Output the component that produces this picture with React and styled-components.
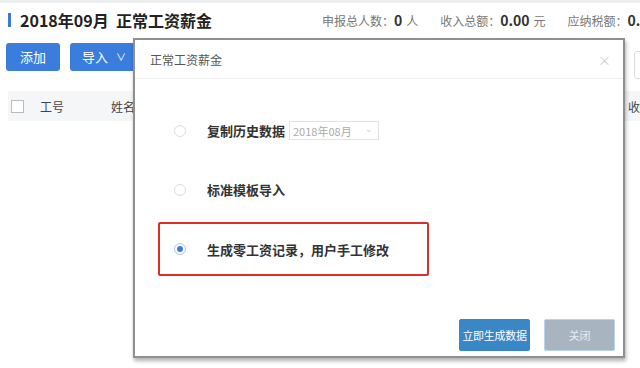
import styled, { createGlobalStyle } from "styled-components";

const Global = createGlobalStyle`
    html, body {
        margin: 0;
        padding: 0;
        background: #fff;
        font-family: "Noto Sans CJK SC", "Noto Sans", sans-serif;
        overflow: hidden;
    }
`;

const Page = styled.div`
    position: relative;
    width: 640px;
    height: 368px;
    border-top: 3px solid #eceef0;
    box-sizing: border-box;
    overflow: hidden;
`;

const Header = styled.div`
    display: flex;
    align-items: center;
    height: 34px;
    padding-left: 8px;
`;

const Title = styled.h1`
    display: flex;
    align-items: center;
    margin: 0;
    font-size: 16px;
    font-weight: 700;
    color: #222;
    white-space: nowrap;
    &::before {
        content: "";
        width: 3px;
        height: 14px;
        background: #3a7bd5;
        margin-right: 9px;
    }
`;

const Stats = styled.div`
    display: flex;
    gap: 22px;
    margin-left: 110px;
    font-size: 12px;
    color: #777;
    white-space: nowrap;
`;

const Num = styled.b`
    font-size: 14px;
    color: #333;
    margin-right: 4px;
`;

const Toolbar = styled.div`
    display: flex;
    align-items: center;
    gap: 10px;
    padding: 5px 6px 0;
    height: 29px;
`;

const Btn = styled.button`
    display: flex;
    align-items: center;
    gap: 8px;
    height: 28px;
    padding: 0 ${(p) => (p.$wide ? "12px" : "14px")};
    border: none;
    border-radius: 3px;
    background: #3b7ddd;
    color: #fff;
    font-family: inherit;
    font-size: 13px;
`;

const Table = styled.div`
    margin: 20px 0 0 8px;
`;

const HeadRow = styled.div`
    display: flex;
    align-items: center;
    height: 30px;
    background: #f5f6f8;
    font-size: 12px;
    color: #444;
`;

const Check = styled.span`
    width: 11px;
    height: 11px;
    border: 1px solid #bbb;
    background: #fff;
    margin: 0 16px 0 3px;
`;

const Col = styled.span`
    width: ${(p) => p.$w}px;
`;

const Overlay = styled.div`
    position: absolute;
    left: 133px;
    top: 35px;
    width: 492px;
    height: 320px;
    box-sizing: border-box;
    background: #fff;
    border: 2px solid #8f8f8f;
    box-shadow: 1px 3px 4px rgba(0, 0, 0, 0.3);
    display: flex;
    flex-direction: column;
`;

const ModalHead = styled.div`
    display: flex;
    align-items: center;
    justify-content: space-between;
    height: 38px;
    padding: 0 12px 0 15px;
    border-bottom: 1px solid #eee;
    font-size: 12px;
    color: #555;
`;

const Close = styled.span`
    color: #d0d0d0;
    font-size: 13px;
`;

const Options = styled.div`
    display: flex;
    flex-direction: column;
    padding: 34px 0 0 23px;
`;

const Option = styled.div`
    display: flex;
    align-items: center;
    height: ${(p) => (p.$boxed ? "50px" : "55px")};
    width: 253px;
    border: 2px solid ${(p) => (p.$boxed ? "#d9302c" : "transparent")};
    border-radius: 2px;
    padding-left: 14px;
    font-size: 13px;
    font-weight: 700;
    color: #333;
    white-space: nowrap;
    margin-top: ${(p) => (p.$boxed ? "3px" : "0")};
    &:first-child {
        margin-top: -12px;
    }
`;

const Radio = styled.span`
    width: 12px;
    height: 12px;
    border-radius: 50%;
    border: 1px solid #ddd;
    margin-right: 21px;
    box-sizing: border-box;
    display: flex;
    align-items: center;
    justify-content: center;
    ${(p) =>
        p.$on &&
        `
        border-color: #aac4ee;
        &::after {
            content: "";
            width: 6px;
            height: 6px;
            border-radius: 50%;
            background: #3b7ddd;
        }
    `}
`;

const DateInput = styled.span`
    display: flex;
    align-items: center;
    justify-content: space-between;
    flex-shrink: 0;
    width: 90px;
    height: 19px;
    box-sizing: border-box;
    margin-left: 4px;
    padding: 0 5px 0 3px;
    border: 1px solid #e2e2e2;
    font-size: 11px;
    font-weight: 400;
    color: #aaa;
    &::after {
        content: "⌄";
        font-size: 9px;
        color: #ccc;
        line-height: 1;
        margin-top: -4px;
    }
`;

const Footer = styled.div`
    margin-top: auto;
    display: flex;
    justify-content: flex-end;
    gap: 14px;
    padding: 0 8px 5px 0;
`;

const FootBtn = styled.button`
    height: 32px;
    width: 71px;
    padding: 0;
    border: 1px solid ${(p) => (p.$gray ? "#b9d4ea" : "#3a87c8")};
    border-radius: 2px;
    background: ${(p) => (p.$gray ? "#a8b5c0" : "#3a87c8")};
    color: ${(p) => (p.$gray ? "#e6ebef" : "#fff")};
    font-family: inherit;
    font-size: 11px;
    letter-spacing: -0.3px;
    white-space: nowrap;
`;

const Edge = styled.div`
    position: absolute;
    right: -6px;
    top: 48px;
    width: 10px;
    height: 26px;
    border: 1px solid #ddd;
    border-radius: 3px;
`;

export default function App() {
    return (
        <Page>
            <Global />
            <Header>
                <Title>2018年09月&nbsp;&nbsp;正常工资薪金</Title>
                <Stats>
                    <span>申报总人数：<Num>0</Num>人</span>
                    <span>收入总额：<Num>0.00</Num>元</span>
                    <span>应纳税额：<Num>0.00</Num>元</span>
                </Stats>
            </Header>
            <Toolbar>
                <Btn>添加</Btn>
                <Btn $wide>导入 <span style={{ fontSize: 10 }}>∨</span></Btn>
            </Toolbar>
            <Table>
                <HeadRow>
                    <Check />
                    <Col $w={71}>工号</Col>
                    <Col $w={60}>姓名</Col>
                    <span style={{ marginLeft: "auto" }}>收</span>
                </HeadRow>
            </Table>
            <Edge />
            <Overlay>
                <ModalHead>
                    <span>正常工资薪金</span>
                    <Close>×</Close>
                </ModalHead>
                <Options>
                    <Option>
                        <Radio />
                        复制历史数据
                        <DateInput>2018年08月</DateInput>
                    </Option>
                    <Option>
                        <Radio />
                        标准模板导入
                    </Option>
                    <Option $boxed>
                        <Radio $on />
                        生成零工资记录，用户手工修改
                    </Option>
                </Options>
                <Footer>
                    <FootBtn>立即生成数据</FootBtn>
                    <FootBtn $gray>关闭</FootBtn>
                </Footer>
            </Overlay>
        </Page>
    );
}
